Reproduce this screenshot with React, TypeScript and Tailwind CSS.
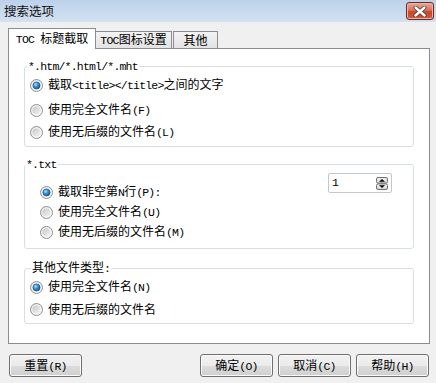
import * as React from "react";

const CJK = "font-['Noto_Sans_CJK_SC',sans-serif]";
const MONO =
  "font-['Liberation_Mono','Noto_Sans_CJK_SC',monospace] text-[11.5px] leading-[14px] tracking-[-0.8px] whitespace-pre";

// SimSun-ish look: half-width runs in a narrow mono face, the rest in CJK
function Txt({ children }: { children: string }) {
  const parts = children.split(/([\x00-\x7f]+)/).filter(Boolean);
  return (
    <span className="whitespace-nowrap">
      {parts.map((p, i) =>
        /^[\x00-\x7f]+$/.test(p) ? (
          <span key={i} className={MONO}>
            {p}
          </span>
        ) : (
          <span key={i}>{p}</span>
        )
      )}
    </span>
  );
}

function Radio({ checked }: { checked?: boolean }) {
  return (
    <svg width="13" height="13" viewBox="0 0 13 13" className="shrink-0" aria-hidden>
      <defs>
        <linearGradient id="rb-ring" x1="0" y1="0" x2="1" y2="1">
          <stop offset="0" stopColor="#e6e6e6" />
          <stop offset="1" stopColor="#fdfdfd" />
        </linearGradient>
        <linearGradient id="rb-in" x1="0" y1="0" x2="1" y2="1">
          <stop offset="0" stopColor="#c8c8c8" />
          <stop offset="1" stopColor="#f4f4f4" />
        </linearGradient>
        <radialGradient id="rb-dot" cx="0.38" cy="0.35" r="0.7">
          <stop offset="0" stopColor="#a9e2ff" />
          <stop offset="0.45" stopColor="#3a92d6" />
          <stop offset="1" stopColor="#0c4f96" />
        </radialGradient>
      </defs>
      <circle cx="6.5" cy="6.5" r="6" fill="url(#rb-ring)" stroke="#8e9093" />
      {checked ? (
        <circle cx="6.5" cy="6.5" r="3.6" fill="url(#rb-dot)" stroke="#1b4f86" strokeWidth="0.6" />
      ) : (
        <circle cx="6.5" cy="6.5" r="4" fill="url(#rb-in)" />
      )}
    </svg>
  );
}

function Option({ label, checked }: { label: string; checked?: boolean }) {
  return (
    <div className="flex h-[20px] items-center gap-[5px]">
      <Radio checked={checked} />
      <Txt>{label}</Txt>
    </div>
  );
}

function Group({
  title,
  legendClass,
  children,
}: {
  title: string;
  legendClass: string;
  children: React.ReactNode;
}) {
  return (
    <fieldset className="rounded-[3px] border border-[#d5dfe5]">
      <legend className={`flex h-[14px] items-center px-[1px] ${legendClass}`}>
        <Txt>{title}</Txt>
      </legend>
      {children}
    </fieldset>
  );
}

function Button({ label }: { label: string }) {
  return (
    <button
      type="button"
      className="flex h-[23px] w-[73px] items-center justify-center rounded-[3px] border border-[#707070] bg-[linear-gradient(#f2f2f2_0%,#ebebeb_50%,#dddddd_50%,#cfcfcf_100%)] shadow-[inset_0_0_0_1px_#fbfbfb] text-[12px] leading-[14px] text-black"
    >
      <Txt>{label}</Txt>
    </button>
  );
}

function SpinBox() {
  return (
    <div className="flex h-[20px] w-[64px] items-center justify-between rounded-[2px] border border-[#c3c6cb] bg-white pl-[3px] pr-[3px]">
      <span className={MONO}>1</span>
      <svg width="12" height="13" viewBox="0 0 12 13" aria-hidden>
        <defs>
          <linearGradient id="spin-g" x1="0" y1="0" x2="0" y2="1">
            <stop offset="0" stopColor="#f4f4f4" />
            <stop offset="1" stopColor="#d6d6d6" />
          </linearGradient>
        </defs>
        <rect x="0.5" y="0.5" width="11" height="5.6" rx="1.5" fill="url(#spin-g)" stroke="#707070" />
        <rect x="0.5" y="6.9" width="11" height="5.6" rx="1.5" fill="url(#spin-g)" stroke="#707070" />
        <path d="M3 4.8 L6 1.9 L9 4.8 Z" fill="#000" />
        <path d="M3 8.2 L6 11.1 L9 8.2 Z" fill="#000" />
      </svg>
    </div>
  );
}

export default function App() {
  return (
    <div className={`flex h-[383px] w-[436px] flex-col bg-[#f0f0f0] text-[12px] leading-[14px] text-black ${CJK}`}>
      {/* title bar */}
      <div className="flex h-[22px] shrink-0 items-center justify-between bg-[linear-gradient(#bcd2ea,#d3e1f0)] pl-[4px] pr-[2px]">
        <span className="text-[12.5px] text-[#111]">搜索选项</span>
        <div className="flex h-[18px] w-[28px] items-center justify-center rounded-[3px] border border-[#6b2a22] bg-[linear-gradient(#eaa999_0%,#d9735d_45%,#c7472f_55%,#cf5b3f_100%)] shadow-[inset_0_0_0_1px_#efb3a4]">
          <svg width="14" height="11" viewBox="0 0 14 11" aria-hidden>
            <path d="M2.5 1.5 L11.5 9.5 M11.5 1.5 L2.5 9.5" stroke="#4a3a38" strokeWidth="4" strokeLinecap="round" />
            <path d="M2.5 1.5 L11.5 9.5 M11.5 1.5 L2.5 9.5" stroke="#ffffff" strokeWidth="2.4" strokeLinecap="round" />
          </svg>
        </div>
      </div>

      <div className="flex flex-col px-[8px] pt-[6px]">
        {/* tab strip */}
        <div className="flex h-[20px] items-end">
          <div className="relative z-10 -mb-px flex h-[21px] w-[88px] items-center justify-center border border-b-0 border-[#898c95] bg-white">
            <Txt>TOC 标题截取</Txt>
          </div>
          <div className="flex h-[17px] w-[76px] items-center justify-center border border-b-0 border-l-0 border-[#898c95] bg-[linear-gradient(#f3f3f3,#e3e3e3)]">
            <Txt>TOC图标设置</Txt>
          </div>
          <div className="ml-px flex h-[17px] w-[45px] items-center justify-center border border-b-0 border-[#898c95] bg-[linear-gradient(#f3f3f3,#e3e3e3)]">
            其他
          </div>
        </div>

        {/* tab panel */}
        <div className="flex h-[296px] w-[422px] flex-col border border-[#898c95] bg-white px-[15px] pt-[10px]">
          <Group title="*.htm/*.html/*.mht" legendClass="ml-[2px]">
            <div className="flex flex-col pb-[4px] pl-[5px] pt-[2px]">
              <Option label="截取<title></title>之间的文字" checked />
              <div className="mt-[5px]">
                <Option label="使用完全文件名(F)" />
              </div>
              <div className="mt-[2px]">
                <Option label="使用无后缀的文件名(L)" />
              </div>
            </div>
          </Group>

          <div className="mt-[10px]">
            <Group title="*.txt" legendClass="ml-0">
              <div className="flex flex-col pb-[6px] pl-[15px] pr-[21px]">
                <div className="flex items-start justify-between">
                  <div className="mt-[11px]">
                    <Option label="截取非空第N行(P):" checked />
                  </div>
                  <div className="mt-[2px]">
                    <SpinBox />
                  </div>
                </div>
                <Option label="使用完全文件名(U)" />
                <Option label="使用无后缀的文件名(M)" />
              </div>
            </Group>
          </div>

          <div className="mt-[12px]">
            <Group title="其他文件类型:" legendClass="ml-[6px]">
              <div className="flex flex-col gap-[2px] pb-[4px] pl-[5px] pt-[2px]">
                <Option label="使用完全文件名(N)" checked />
                <Option label="使用无后缀的文件名" />
              </div>
            </Group>
          </div>
        </div>
      </div>

      {/* dialog buttons */}
      <div className="mt-[10px] flex items-center justify-between pl-[9px] pr-[7px]">
        <Button label="重置(R)" />
        <div className="flex gap-[5px]">
          <Button label="确定(O)" />
          <Button label="取消(C)" />
          <Button label="帮助(H)" />
        </div>
      </div>
    </div>
  );
}
